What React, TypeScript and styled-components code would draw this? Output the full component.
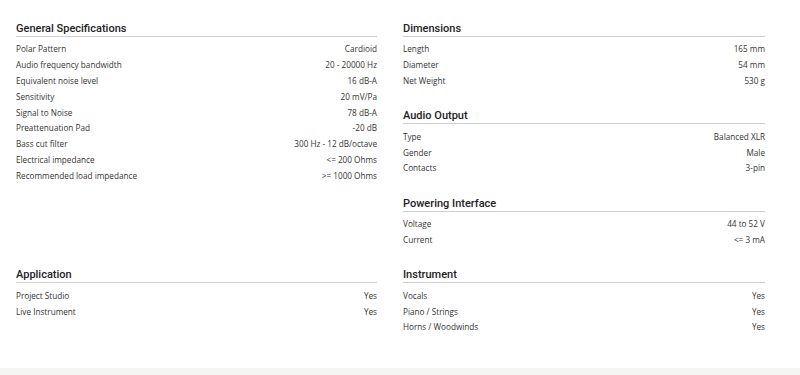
import React from 'react';
import styled, { createGlobalStyle } from 'styled-components';

type Spec = [string, string];

type Section = {
  title: string,
  rows: Spec[],
};

const generalSpecs: Section = {
  title: 'General Specifications',
  rows: [
    ['Polar Pattern', 'Cardioid'],
    ['Audio frequency bandwidth', '20 - 20000 Hz'],
    ['Equivalent noise level', '16 dB-A'],
    ['Sensitivity', '20 mV/Pa'],
    ['Signal to Noise', '78 dB-A'],
    ['Preattenuation Pad', '-20 dB'],
    ['Bass cut filter', '300 Hz - 12 dB/octave'],
    ['Electrical impedance', '<= 200 Ohms'],
    ['Recommended load impedance', '>= 1000 Ohms'],
  ],
};

const rightTop: Section[] = [
  {
    title: 'Dimensions',
    rows: [
      ['Length', '165 mm'],
      ['Diameter', '54 mm'],
      ['Net Weight', '530 g'],
    ],
  },
  {
    title: 'Audio Output',
    rows: [
      ['Type', 'Balanced XLR'],
      ['Gender', 'Male'],
      ['Contacts', '3-pin'],
    ],
  },
  {
    title: 'Powering Interface',
    rows: [
      ['Voltage', '44 to 52 V'],
      ['Current', '<= 3 mA'],
    ],
  },
];

const application: Section = {
  title: 'Application',
  rows: [
    ['Project Studio', 'Yes'],
    ['Live Instrument', 'Yes'],
  ],
};

const instrument: Section = {
  title: 'Instrument',
  rows: [
    ['Vocals', 'Yes'],
    ['Piano / Strings', 'Yes'],
    ['Horns / Woodwinds', 'Yes'],
  ],
};

const GlobalStyle = createGlobalStyle`
  html, body {
    margin: 0;
    padding: 0;
    background: #ffffff;
  }
  body {
    font-family: "Open Sans", "Noto Sans", sans-serif;
    color: #333;
  }
`;

const Page = styled.div`
  width: 800px;
  height: 375px;
  display: flex;
  flex-direction: column;
  overflow: hidden;
`;

const SpecGrid = styled.div`
  display: grid;
  grid-template-columns: 361px 362px;
  align-content: start;
  column-gap: 26px;
  row-gap: 19px;
  padding: 20px 0 0 16px;
  flex: 1;
`;

const Column = styled.div`
  display: flex;
  flex-direction: column;
  gap: 19px;
`;

const Heading = styled.h3`
  margin: 0;
  padding-top: 2px;
  border-bottom: 1px solid #cfcfcf;
  font-family: Roboto, "Liberation Sans", sans-serif;
  font-size: 11px;
  line-height: 14px;
  font-weight: 500;
  color: #222;
`;

const Rows = styled.dl`
  margin: 4px 0 0;
`;

const Row = styled.div`
  display: flex;
  justify-content: space-between;
  align-items: center;
  height: 15.8px;
  font-size: 8.2px;
  color: #333;
`;

const Label = styled.dt`
  margin: 0;
`;

const Value = styled.dd`
  margin: 0;
  text-align: right;
`;

const Footer = styled.div`
  height: 7px;
  background: #f5f5f4;
`;

const SpecSection = ({ section }: { section: Section }) => (
  <section>
    <Heading>{section.title}</Heading>
    <Rows>
      {section.rows.map(([label, value]) => (
        <Row key={label}>
          <Label>{label}</Label>
          <Value>{value}</Value>
        </Row>
      ))}
    </Rows>
  </section>
);

const App = () => (
  <Page>
    <GlobalStyle />
    <SpecGrid>
      <SpecSection section={generalSpecs} />
      <Column>
        {rightTop.map((s) => (
          <SpecSection key={s.title} section={s} />
        ))}
      </Column>
      <SpecSection section={application} />
      <SpecSection section={instrument} />
    </SpecGrid>
    <Footer />
  </Page>
);

export default App;
